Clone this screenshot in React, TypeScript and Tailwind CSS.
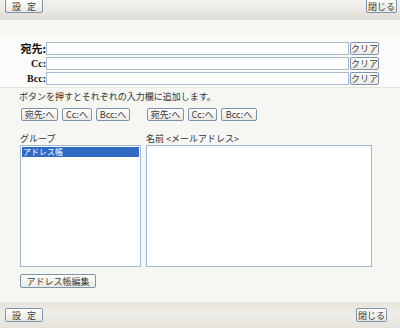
import React from "react";

const jp = { fontFamily: '"Noto Sans CJK JP", "Noto Sans", sans-serif' };

function Btn({ w, children, h = 13 }: { w: number; children: React.ReactNode; h?: number }) {
  return (
    <button
      className="flex items-center justify-center border border-[#7d93ad] rounded-[2px] bg-gradient-to-b from-[#ffffff] to-[#e9e8e3] text-[9px] leading-none text-[#3a3a3a] shrink-0 p-0"
      style={{ width: w, height: h, ...jp }}
    >
      {children}
    </button>
  );
}

function FieldRow({ label, serif, first }: { label: string; serif?: boolean; first?: boolean }) {
  return (
    <div className={`flex items-center h-[13px] ${first ? "" : "mt-[2px]"}`}>
      <div
        className={`w-[46px] text-right font-bold text-[#111] leading-none ${serif ? "text-[10px]" : "text-[11px]"}`}
        style={serif ? { fontFamily: '"Liberation Serif", serif' } : jp}
      >
        {label}
      </div>
      <div className="w-[303px] h-[13px] bg-white border border-[#a7bbd1] shrink-0" />
      <div className="ml-[1px]">
        <Btn w={29}>クリア</Btn>
      </div>
    </div>
  );
}

export default function App() {
  return (
    <div className="w-[400px] h-[328px] bg-[#f6f6f3] flex flex-col overflow-hidden" style={jp}>
      {/* top bar */}
      <div className="h-[20px] shrink-0 bg-gradient-to-b from-[#f3f2ee] via-[#ebe9e3] to-[#dedbd3] flex justify-between items-start pl-[5px] pr-[3px]">
        <div className="-mt-[1px]">
          <Btn w={38} h={14}>設&nbsp;&nbsp;&nbsp;定</Btn>
        </div>
        <div className="-mt-[1px]">
          <Btn w={31} h={14}>閉じる</Btn>
        </div>
      </div>

      {/* fields */}
      <div className="mt-[16px] bg-[#fbfbfa] pt-[6px] pb-[2px] border-b border-[#e4e4df]">
        <FieldRow label="宛先:" first />
        <FieldRow label="Cc:" serif />
        <FieldRow label="Bcc:" serif />
      </div>

      <div className="mt-[2px] h-[13px] pl-[19px] text-[9px] leading-[13px] text-[#333]">
        ボタンを押すとそれぞれの入力欄に追加します。
      </div>

      <div className="mt-[5px] flex pl-[21px]">
        <div className="flex gap-[4px]">
          <Btn w={37}>宛先:へ</Btn>
          <Btn w={30}>Cc:へ</Btn>
          <Btn w={34}>Bcc:へ</Btn>
        </div>
        <div className="flex ml-[17px] gap-[4px]">
          <Btn w={37}>宛先:へ</Btn>
          <Btn w={29}>Cc:へ</Btn>
          <Btn w={36}>Bcc:へ</Btn>
        </div>
      </div>

      <div className="mt-[11px] flex pl-[20px]">
        <div className="flex flex-col w-[121px]">
          <div className="h-[13px] text-[9px] leading-[13px] text-[#333]">グループ</div>
          <div className="h-[122px] bg-white border border-[#a3b8cf] p-[1px]">
            <div className="h-[10px] bg-[#316ac5] text-white text-[8px] leading-[10px] pl-[1px]">アドレス帳</div>
          </div>
        </div>
        <div className="flex flex-col w-[226px] ml-[5px]">
          <div className="h-[13px] text-[9px] leading-[13px] text-[#333]">名前&nbsp;&lt;メールアドレス&gt;</div>
          <div className="h-[122px] bg-white border border-[#a3b8cf]" />
        </div>
      </div>

      <div className="mt-[7px] pl-[20px]">
        <Btn w={76} h={14}>アドレス帳編集</Btn>
      </div>

      {/* bottom bar */}
      <div className="mt-[14px] flex-1 bg-gradient-to-b from-[#e7e4dd] via-[#efede8] to-[#e6e3dc] flex justify-between items-start pt-[6px] pl-[5px] pr-[13px]">
        <Btn w={38} h={14}>設&nbsp;&nbsp;&nbsp;定</Btn>
        <Btn w={31} h={14}>閉じる</Btn>
      </div>
    </div>
  );
}
